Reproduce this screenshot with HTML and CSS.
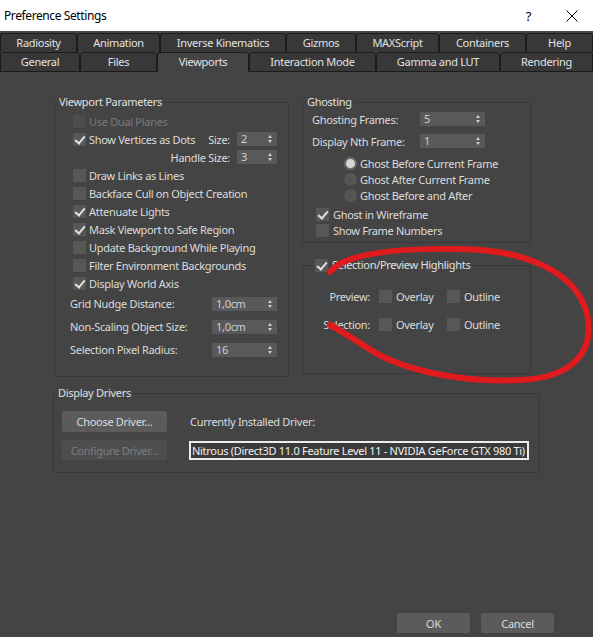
FILE: index.html
```html
<!DOCTYPE html>
<html lang="en">
<head>
  <meta charset="UTF-8" />
  <title>Preference Settings</title>
  <link rel="stylesheet" href="styles.css">
</head>
<body>

  <div class="titlebar">
    <span class="title">Preference Settings</span>
    <span class="help">?</span>
    <svg class="close" viewBox="0 0 12 12"><path d="M0.5 0.5 L11.5 11.5 M11.5 0.5 L0.5 11.5" /></svg>
  </div>

  <div class="tabs">
    <div class="tab-row back">
      <div class="tab">Radiosity</div>
      <div class="tab">Animation</div>
      <div class="tab">Inverse Kinematics</div>
      <div class="tab">Gizmos</div>
      <div class="tab">MAXScript</div>
      <div class="tab">Containers</div>
      <div class="tab">Help</div>
    </div>
    <div class="tab-row front">
      <div class="tab">General</div>
      <div class="tab">Files</div>
      <div class="tab active">Viewports</div>
      <div class="tab">Interaction Mode</div>
      <div class="tab">Gamma and LUT</div>
      <div class="tab">Rendering</div>
    </div>
  </div>

  <div class="panel">
    <div class="columns">

      <fieldset class="group params">
        <legend>Viewport Parameters</legend>
        <div class="group-body">
          <div class="row disabled"><span class="box"></span>Use Dual Planes</div>
          <div class="row"><span class="box on"></span>Show Vertices as Dots
            <span class="field-inline">Size: <span class="spin small">2</span></span>
          </div>
          <div class="row right">Handle Size: <span class="spin small">3</span></div>
          <div class="row"><span class="box"></span>Draw Links as Lines</div>
          <div class="row"><span class="box"></span>Backface Cull on Object Creation</div>
          <div class="row"><span class="box on"></span>Attenuate Lights</div>
          <div class="row"><span class="box on"></span>Mask Viewport to Safe Region</div>
          <div class="row"><span class="box"></span>Update Background While Playing</div>
          <div class="row"><span class="box"></span>Filter Environment Backgrounds</div>
          <div class="row"><span class="box on"></span>Display World Axis</div>
          <div class="spin-row"><span>Grid Nudge Distance:</span><span class="spin">1,0cm</span></div>
          <div class="spin-row"><span>Non-Scaling Object Size:</span><span class="spin">1,0cm</span></div>
          <div class="spin-row"><span>Selection Pixel Radius:</span><span class="spin">16</span></div>
        </div>
      </fieldset>

      <div class="side">
        <fieldset class="group ghosting">
          <legend>Ghosting</legend>
          <div class="group-body">
            <div class="ghost-row"><span>Ghosting Frames:</span><span class="spin">5</span></div>
            <div class="ghost-row"><span>Display Nth Frame:</span><span class="spin">1</span></div>
            <div class="radios">
              <div class="row"><span class="radio on"></span>Ghost Before Current Frame</div>
              <div class="row"><span class="radio"></span>Ghost After Current Frame</div>
              <div class="row"><span class="radio"></span>Ghost Before and After</div>
            </div>
            <div class="checks">
              <div class="row"><span class="box on"></span>Ghost in Wireframe</div>
              <div class="row"><span class="box"></span>Show Frame Numbers</div>
            </div>
          </div>
        </fieldset>

        <fieldset class="group highlights">
          <legend><span class="box on"></span>Selection/Preview Highlights</legend>
          <div class="group-body hl-grid">
            <span class="hl-label">Preview:</span>
            <span class="opt"><span class="box"></span>Overlay</span>
            <span class="opt"><span class="box"></span>Outline</span>
            <span class="hl-label">Selection:</span>
            <span class="opt"><span class="box"></span>Overlay</span>
            <span class="opt"><span class="box"></span>Outline</span>
          </div>
        </fieldset>
      </div>
    </div>

    <fieldset class="group drivers">
      <legend>Display Drivers</legend>
      <div class="group-body drivers-grid">
        <button class="btn">Choose Driver…</button>
        <span class="driver-label">Currently Installed Driver:</span>
        <button class="btn" disabled>Configure Driver…</button>
        <div class="driver-field">Nitrous (Direct3D 11.0 Feature Level 11 - NVIDIA GeForce GTX 980 Ti)</div>
      </div>
    </fieldset>
  </div>

  <div class="footer">
    <button class="btn">OK</button>
    <button class="btn">Cancel</button>
  </div>

  <!-- red marker scribble on top of the screenshot -->
  <svg class="scribble" viewBox="0 0 593 637">
    <path d="M330 272 C345 253 400 248 460 249 C530 250 577 274 587 314 C595 352 572 378 520 380 C460 383 400 370 366 347 C352 338 340 330 330 325" />
  </svg>

</body>
</html>
```

FILE: styles.css
```css
* {
  box-sizing: border-box;
}
body {
  margin: 0;
  height: 100vh;
  display: flex;
  flex-direction: column;
  position: relative;
  background: #444;
  font-family: "Noto Sans", sans-serif;
  font-size: 11px;
  letter-spacing: -0.3px;
  color: #dcdcdc;
  overflow: hidden;
}

/* title bar */
.titlebar {
  height: 31px;
  flex-shrink: 0;
  display: flex;
  align-items: center;
  padding: 0 15px 0 4px;
  background: #fff;
  color: #000;
  font-size: 12px;
  letter-spacing: -0.4px;
}
.titlebar .help {
  margin-left: auto;
  margin-right: 35px;
  font-size: 13px;
}
.close {
  width: 12px;
  height: 12px;
  stroke: #000;
  stroke-width: 1;
  fill: none;
}

/* tabs */
.tabs {
  padding-top: 2px;
}
.tab-row {
  display: grid;
}
.tab-row.back {
  grid-template-columns: 77px 83px 126px 70px 83px 87px 1fr;
}
.tab-row.front {
  grid-template-columns: 80px 77px 92px 127px 124px 1fr;
}
.tab {
  height: 19px;
  line-height: 18px;
  text-align: center;
  white-space: nowrap;
  background: #383838;
  border: 1px solid #1b1b1b;
  border-bottom: 0;
  border-radius: 3px 3px 0 0;
  color: #e2e2e2;
}
.front .tab {
  height: 20px;
  border-bottom: 1px solid #1b1b1b;
}
.front .tab.active {
  background: #444;
  border-bottom-color: #444;
}

/* panel */
.panel {
  padding: 23px 0 0 54px;
}
.columns {
  display: flex;
  align-items: flex-start;
  gap: 13px;
}
.group {
  margin: 0;
  padding: 0;
  min-width: 0;
  border: 1px solid #383838;
  border-radius: 2px;
}
.group legend {
  margin-left: 2px;
  padding: 0 2px;
  line-height: 14px;
  color: #e0e0e0;
}

.row {
  height: 18px;
  display: flex;
  align-items: center;
  gap: 3px;
  white-space: nowrap;
}
.row.disabled {
  color: #7a7a7a;
}
.row.right {
  justify-content: flex-end;
  gap: 7px;
}
.field-inline {
  margin-left: auto;
  display: flex;
  align-items: center;
  gap: 7px;
}

.box {
  width: 13px;
  height: 13px;
  flex-shrink: 0;
  position: relative;
  background: #575757;
}
.disabled .box {
  background: #4c4c4c;
}
.box.on::after {
  content: "";
  position: absolute;
  left: 4px;
  top: 1px;
  width: 4px;
  height: 8px;
  border: solid #e0e0e0;
  border-width: 0 2.5px 2.5px 0;
  transform: rotate(40deg);
}
.radio {
  width: 13px;
  height: 13px;
  flex-shrink: 0;
  border-radius: 50%;
  background: #555;
}
.radio.on {
  background: #d6d6d6;
  border: 2px solid #6a6a6a;
}

.spin {
  width: 65px;
  height: 14px;
  flex-shrink: 0;
  position: relative;
  padding-left: 4px;
  line-height: 14px;
  background: #595959;
  color: #cfcfcf;
}
.spin.small {
  width: 40px;
}
.spin::before,
.spin::after {
  content: "";
  position: absolute;
  right: 5px;
  border-left: 2.5px solid transparent;
  border-right: 2.5px solid transparent;
}
.spin::before {
  top: 3px;
  border-bottom: 3px solid #d0d0d0;
}
.spin::after {
  bottom: 3px;
  border-top: 3px solid #d0d0d0;
}

/* viewport parameters */
.params {
  width: 235px;
  flex-shrink: 0;
}
.params .group-body {
  padding: 3px 11px 15px 15px;
}
.params .row {
  padding-left: 3px;
}
.params .row.right {
  padding-left: 0;
}
.spin-row {
  height: 23px;
  display: flex;
  align-items: center;
  justify-content: space-between;
  white-space: nowrap;
}

/* right column */
.side {
  width: 229px;
  display: flex;
  flex-direction: column;
}
.ghosting .group-body {
  padding: 0 0 4px 9px;
  margin-top: -1px;
}
.ghost-row {
  height: 22px;
  display: grid;
  grid-template-columns: 108px 66px;
  align-items: center;
}
.radios {
  margin: 3px 0 0 32px;
}
.radios .row {
  height: 16px;
}
.checks {
  margin: 3px 0 0 4px;
}
.checks .row {
  height: 16px;
  gap: 4px;
}

.highlights {
  margin-top: 15px;
}
.highlights legend {
  margin-left: 10px;
  display: flex;
  align-items: center;
  gap: 4px;
}
.hl-grid {
  display: grid;
  grid-template-columns: 76px 68px auto;
  grid-auto-rows: 20px;
  row-gap: 8px;
  align-items: center;
  padding: 14px 0 39px 0;
}
.hl-label {
  text-align: right;
  padding-right: 9px;
}
.opt {
  display: flex;
  align-items: center;
  gap: 4px;
}

/* display drivers */
.drivers {
  width: 487px;
  margin: 9px 0 0 -1px;
}
.drivers-grid {
  display: grid;
  grid-template-columns: 105px 1fr;
  grid-template-rows: 21px 20px;
  column-gap: 22px;
  row-gap: 8px;
  align-items: center;
  padding: 11px 10px 12px 8px;
}
.driver-label {
  padding-left: 1px;
}
.driver-field {
  height: 19px;
  line-height: 15px;
  padding-left: 1px;
  overflow: hidden;
  white-space: nowrap;
  background: #3a3a3a;
  border: 2px solid #ececec;
  color: #f0f0f0;
}

.btn {
  height: 100%;
  padding: 0;
  border: none;
  border-radius: 2px;
  background: #5b5b5b;
  color: #dcdcdc;
  font: inherit;
  letter-spacing: inherit;
}
.btn:disabled {
  background: #4e4e4e;
  color: #7d7d7d;
}

/* footer */
.footer {
  margin-top: auto;
  display: flex;
  justify-content: flex-end;
  gap: 11px;
  padding: 0 39px 4px 0;
}
.footer .btn {
  width: 73px;
  height: 20px;
}

.scribble {
  position: absolute;
  left: 0;
  top: 0;
  width: 593px;
  height: 637px;
  pointer-events: none;
  fill: none;
  stroke: #e11b1d;
  stroke-width: 6;
  stroke-linecap: round;
}
```
